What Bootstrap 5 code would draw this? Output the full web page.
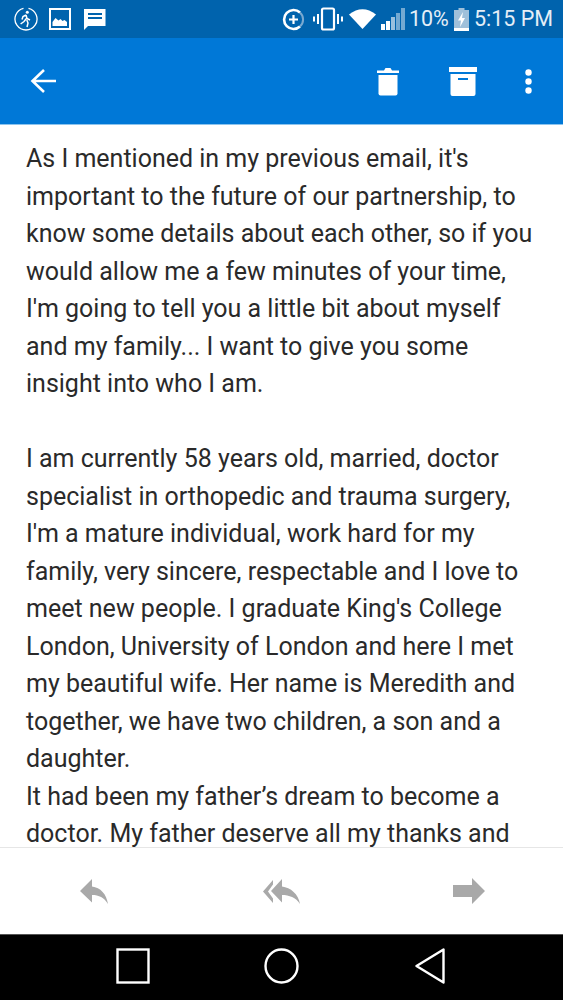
<!DOCTYPE html>
<html lang="en"><head><meta charset="utf-8"><title>Mail</title>
<link href="https://cdn.jsdelivr.net/npm/bootstrap@5.3.0/dist/css/bootstrap.min.css" rel="stylesheet">
<style>
html,body{height:1000px;overflow:hidden;background:#fff}
.phone{height:1000px;width:563px;font-family:Roboto,"Liberation Sans",sans-serif}
.stat{height:38px;background:#0063ad;color:#e4eef7;font-size:21.5px;padding:0 10px 0 14px}
.appb{height:87px;background:#0078d7;border-bottom:1px solid #8cc4ee;padding:0 0 0 30px}
.bodytxt{flex:1 1 0;min-height:0;overflow:hidden;padding:15px 20px 0 26px;font-size:25px;line-height:37.5px;color:#2a2a2a}
.bodytxt p{margin:0}
.tools{height:87px;border-top:1px solid #e6e6e6;background:#fff;padding:0 78px 0 80px}
.sysnav{height:66px;background:#000;border-top:1px solid #555;padding:0 118px 3px 116px}
.ti{flex:0 0 auto;display:block}
.circ{margin-right:2px}
</style></head><body>
<div class="phone d-flex flex-column">
 <div class="stat d-flex align-items-center justify-content-between">
  <div class="d-flex align-items-center">
   <svg class="ti" width="24" height="24" viewBox="0 0 24 24" style="margin-right:11px"><path d="M9.500 1.300A11 11 0 1 0 14.500 1.300" fill="none" stroke="#fff" stroke-width="1.300"/><circle cx="13.300" cy="5.200" r="1.500" fill="#fff"/><path d="M12 8l-3 1.500-1 3M12 8l1 3.500 3 1.500M12.400 11.500l-2.400 3-3.400 2.500M12.800 13l1.200 3-1 4" fill="none" stroke="#fff" stroke-width="1.500"/></svg>
   <svg class="ti" width="22" height="22" viewBox="0 0 22 22" style="margin-right:12px"><rect x="1" y="1" width="20" height="20" fill="none" stroke="#fff" stroke-width="2"/><path d="M3.500 18v-4l3-4 3 2.500 2-1.500 2 2 2-1 2.500 2V18z" fill="#fff"/></svg>
   <svg class="ti" width="23" height="21" viewBox="0 0 23 21"><path d="M1 0h21.500v17H5l-4 4z" fill="#fff"/><path d="M5 5h14M5 9h14" stroke="#0063ad" stroke-width="1.800"/></svg>
  </div>
  <div class="d-flex align-items-center">
   <svg class="ti" width="23" height="23" viewBox="0 0 23 23" style="margin-right:8px"><path d="M18 4.500A9.500 9.500 0 1 0 18 18.500" fill="none" stroke="#fff" stroke-width="2.600"/><path d="M18 4.500A9.500 9.500 0 0 1 18 18.500" fill="none" stroke="#7aa9d0" stroke-width="2"/><path d="M11.500 7v9M7 11.500h9" stroke="#fff" stroke-width="2.200"/></svg>
   <svg class="ti" width="30" height="24" viewBox="0 0 30 24" style="margin-right:6px"><rect x="9" y="1.500" width="12" height="21" rx="1.500" fill="none" stroke="#fff" stroke-width="2.200"/><path d="M5 7v10M25 7v10M1 9.500v5M29 9.500v5" stroke="#fff" stroke-width="2"/></svg>
   <svg class="ti" width="27" height="20" viewBox="0 0 27 20" style="margin-right:5px"><path d="M0 5.500Q13.500-5 27 5.500L13.500 20z" fill="#fff"/></svg>
   <svg class="ti" width="24" height="22" viewBox="0 0 24 22" style="margin-right:4px"><rect x="0" y="16" width="4" height="6" fill="#fff"/><rect x="5" y="13" width="4" height="9" fill="#fff"/><rect x="10" y="9" width="4" height="13" fill="#fff" opacity=".6"/><rect x="15" y="5" width="4" height="17" fill="#fff" opacity=".45"/><rect x="20" y="0" width="4" height="22" fill="#fff" opacity=".45"/></svg>
   <span style="margin-right:5px">10%</span>
   <svg class="ti" width="15" height="23" viewBox="0 0 15 23" style="margin-right:5px"><path d="M4.500 0h6v2H15v21H0V2h4.500z" fill="#9fc0da"/><path d="M0 20h15v3H0z" fill="#fff"/><path d="M9 4L4 12.500h3L6 19l5-9H8z" fill="#fff"/></svg>
   <span>5:15 PM</span>
  </div>
 </div>
 <div class="appb d-flex align-items-center justify-content-between">
  <svg class="ti" width="27" height="26" viewBox="0 0 27 26"><path d="M26 13H3M14 2L2.500 13 14 24" fill="none" stroke="#fff" stroke-width="2.600"/></svg>
  <div class="d-flex align-items-center">
   <svg class="ti" width="22" height="29" viewBox="0 0 22 29" style="margin-right:50px"><path d="M0 3.500h7L8.500 1h5L15 3.500h7V6H0z" fill="#fff"/><path d="M1.500 8h19v18.500a2 2 0 0 1-2 2h-15a2 2 0 0 1-2-2z" fill="#fff"/></svg>
   <svg class="ti" width="28" height="29" viewBox="0 0 28 29" style="margin-right:48px"><rect width="28" height="5" fill="#fff"/><path d="M1.500 7h25v20a2 2 0 0 1-2 2h-21a2 2 0 0 1-2-2zM9 11v2h10v-2z" fill="#fff" fill-rule="evenodd"/></svg>
   <svg class="ti" width="7" height="25" viewBox="0 0 7 25" style="margin-right:31px"><circle cx="3.500" cy="3.500" r="3.200" fill="#fff"/><circle cx="3.500" cy="12.500" r="3.200" fill="#fff"/><circle cx="3.500" cy="21.500" r="3.200" fill="#fff"/></svg>
  </div>
 </div>
 <div class="bodytxt">
  <p>As I mentioned in my previous email, it's<br>important to the future of our partnership, to<br>know some details about each other, so if you<br>would allow me a few minutes of your time,<br>I'm going to tell you a little bit about myself<br>and my family... I want to give you some<br>insight into who I am.</p>
  <p>&nbsp;</p>
  <p>I am currently 58 years old, married, doctor<br>specialist in orthopedic and trauma surgery,<br>I'm a mature individual, work hard for my<br>family, very sincere, respectable and I love to<br>meet new people. I graduate King's College<br>London, University of London and here I met<br>my beautiful wife. Her name is Meredith and<br>together, we have two children, a son and a<br>daughter.</p>
  <p>It had been my father’s dream to become a<br>doctor. My father deserve all my thanks and</p>
 </div>
 <div class="tools d-flex align-items-center justify-content-between">
  <svg class="ti" width="28" height="25" viewBox="0 0 28 25"><path d="M12 0L0 12l12 11.500V16c7 0 12 2.500 16 9-1.500-10-7.500-16.500-16-17.500z" fill="#a9a9a9"/></svg>
  <svg class="ti" width="38" height="25" viewBox="0 0 38 25"><path d="M11 1L1 12.500 11 24v-4.500L6 12.500 11 5.500z" fill="#a9a9a9"/><path d="M20 0L9 12l11 11.500V16c7 0 14 2.500 18 9-1.500-10-9.500-16.500-18-17.500z" fill="#a9a9a9"/></svg>
  <svg class="ti" width="32" height="26" viewBox="0 0 32 26"><path d="M0 7h19V0l13 13-13 13v-7H0z" fill="#a9a9a9"/></svg>
 </div>
 <div class="sysnav d-flex align-items-center justify-content-between">
  <svg class="ti" width="34" height="36" viewBox="0 0 34 36"><rect x="1.500" y="1.500" width="31" height="33" fill="none" stroke="#fff" stroke-width="2.400"/></svg>
  <svg class="ti circ" width="35" height="36" viewBox="0 0 35 36"><ellipse cx="17.500" cy="18" rx="16" ry="16.500" fill="none" stroke="#fff" stroke-width="2.400"/></svg>
  <svg class="ti" width="30" height="36" viewBox="0 0 30 36"><path d="M28.500 1.500v33L1.500 18z" fill="none" stroke="#fff" stroke-width="2.400" stroke-linejoin="round"/></svg>
 </div>
</div>
</body></html>
